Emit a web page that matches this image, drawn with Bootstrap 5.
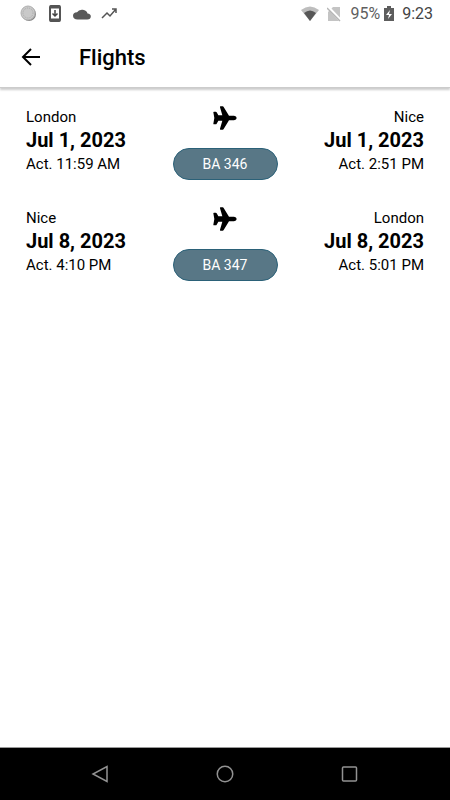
<!DOCTYPE html>
<html lang="en">
<head>
<meta charset="utf-8">
<meta name="viewport" content="width=device-width, initial-scale=1">
<title>Flights</title>
<link href="https://cdn.jsdelivr.net/npm/bootstrap@5.3.0/dist/css/bootstrap.min.css" rel="stylesheet">
<style>
body { font-family: Roboto, "Liberation Sans", sans-serif; color: #000; background: #fff; }
svg { display: block; flex: none; }
.status-bar { height: 28px; padding: 0 17px 0 20px; font-size: 16px; line-height: 24px; color: #5f5f5f; }
.status-bar .clock { color: #444; }
.status-icons { gap: 10px; }
.app-bar { height: 60px; padding: 0 20px; gap: 37px; border-bottom: 1px solid #ccc; box-shadow: 0 2px 2px rgba(0,0,0,.2); }
.app-bar h1 { font-size: 22px; line-height: 28px; font-weight: 500; }
.flight-list { padding: 17px 26px; gap: 26px; }
.place { font-size: 15px; line-height: 24px; }
.place strong { font-size: 20px; line-height: 23px; font-weight: 700; }
.route { gap: 18px; padding-top: 1px; }
.flight-btn { width: 105px; height: 32px; padding: 0; font-size: 14px; line-height: 20px; --bs-btn-color: #fff; --bs-btn-bg: #587786; --bs-btn-border-color: #2b6178; --bs-btn-hover-color: #fff; --bs-btn-hover-bg: #4b6977; }
.nav-keys { height: 53px; background: #000; border-top: 1px solid #999; padding: 0 38px; }
.nav-keys .btn { width: 125px; }
</style>
<script src="https://cdn.jsdelivr.net/npm/bootstrap@5.3.0/dist/js/bootstrap.bundle.min.js"></script>
</head>
<body class="d-flex flex-column min-vh-100">
<svg width="0" height="0" class="position-absolute" aria-hidden="true">
  <symbol id="plane" viewBox="0 0 72 72"><path d="M1 19Q1 17 3 17H8Q10 17 11 19L16 28H28L21 4Q20 1 23 1H29Q31 1 32 3L48 29H63Q71 30 71 36T63 43H48L32 69Q31 71 29 71H23Q20 71 21 68L28 44H16L11 53Q10 55 8 55H3Q1 55 1 53L4 36Z"/></symbol>
</svg>
<div class="status-bar d-flex align-items-center justify-content-between">
  <div class="status-icons d-flex align-items-center">
    <svg width="17" height="18" viewBox="0 0 17 18"><circle cx="9" cy="9" r="7" fill="#858585"/><circle cx="8" cy="8" r="7" fill="#c9c9c9" stroke="#b0b0b0"/><circle cx="8" cy="8" r="5" fill="none" stroke="#aaa" stroke-dasharray="1 1"/></svg>
    <svg width="16" height="18" viewBox="0 0 16 18"><rect x="3" y="1" width="10" height="15" rx="1" fill="#fff" stroke="#555" stroke-width="2"/><path d="M3 2h10M3 15h10" stroke="#555" stroke-width="3"/><path d="M8 5v6M5.500 8.500 8 11l2.500-2.500" fill="none" stroke="#444" stroke-width="1.500"/></svg>
    <svg width="18" height="18" viewBox="0 0 24 24" fill="#595959"><path d="M19.350 10.040A7.490 7.490 0 0 0 5.350 8.040 6 6 0 0 0 6 20h13a5 5 0 0 0 .350-9.960z" transform="translate(0 3) scale(1 .82)"/></svg>
    <svg width="18" height="18" viewBox="0 0 18 18" fill="none" stroke="#555" stroke-width="1.500"><path d="m1 13 5-5 3 3 6-7M11 4h4v4"/></svg>
  </div>
  <div class="d-flex align-items-center">
    <svg width="18" height="18" viewBox="0 0 18 18"><path d="M0 5Q9-2 18 5L9 16Z" fill="#bdbdbd"/><path d="M3 8Q9 3 15 8L9 16Z" fill="#575757"/></svg>
    <svg class="mx-2" width="15" height="18" viewBox="2 0 15 18"><path d="M8 2h7v14H3V7Z" fill="#c4c4c4"/><path d="m3 2 13 14" stroke="#fff" stroke-width="3"/><path d="m2 3 13 13" stroke="#b5b5b5" stroke-width="1.500"/></svg>
    <span>95%</span>
    <svg class="ms-1 me-2" width="10" height="18" viewBox="1 0 10 18"><path d="M4 1h4v2h3v13H1V3h3Z" fill="#5d5d5d"/><path d="M7 5 3 10h3l-1 4 4-5H6Z" fill="#fff"/></svg>
    <span class="clock">9:23</span>
  </div>
</div>
<header class="app-bar d-flex align-items-center">
  <button type="button" class="btn p-0 border-0" aria-label="Back"><svg width="22" height="22" viewBox="0 0 22 22" fill="none" stroke="#000" stroke-width="2"><path d="M20 10H3M11 2l-8 8 8 8"/></svg></button>
  <h1 class="m-0">Flights</h1>
</header>
<main class="flight-list flex-grow-1 d-flex flex-column">
  <section class="row g-0">
    <div class="place col"><div>London</div><strong class="d-block">Jul 1, 2023</strong><div>Act. 11:59 AM</div></div>
    <div class="route col-auto d-flex flex-column align-items-center"><svg width="24" height="24" role="img" aria-label="to"><use href="#plane"/></svg><button type="button" class="flight-btn btn rounded-pill">BA 346</button></div>
    <div class="place col text-end"><div>Nice</div><strong class="d-block">Jul 1, 2023</strong><div>Act. 2:51 PM</div></div>
  </section>
  <section class="row g-0">
    <div class="place col"><div>Nice</div><strong class="d-block">Jul 8, 2023</strong><div>Act. 4:10 PM</div></div>
    <div class="route col-auto d-flex flex-column align-items-center"><svg width="24" height="24" role="img" aria-label="to"><use href="#plane"/></svg><button type="button" class="flight-btn btn rounded-pill">BA 347</button></div>
    <div class="place col text-end"><div>London</div><strong class="d-block">Jul 8, 2023</strong><div>Act. 5:01 PM</div></div>
  </section>
</main>
<nav class="nav-keys d-flex align-items-center justify-content-between" aria-label="System">
  <button type="button" class="btn p-0 border-0 d-flex justify-content-center" aria-label="Back"><svg width="18" height="18" viewBox="0 0 18 18" fill="none" stroke="#929292" stroke-width="1.500"><path d="M16 1.500v15L2 9Z"/></svg></button>
  <button type="button" class="btn p-0 border-0 d-flex justify-content-center" aria-label="Home"><svg width="18" height="18" viewBox="0 0 18 18" fill="none" stroke="#929292" stroke-width="1.500"><circle cx="9" cy="9" r="7.750"/></svg></button>
  <button type="button" class="btn p-0 border-0 d-flex justify-content-center" aria-label="Recent apps"><svg width="18" height="18" viewBox="0 0 18 18" fill="none" stroke="#929292" stroke-width="1.500"><rect x="1.500" y="2" width="14" height="14" rx="1"/></svg></button>
</nav>
</body>
</html>
